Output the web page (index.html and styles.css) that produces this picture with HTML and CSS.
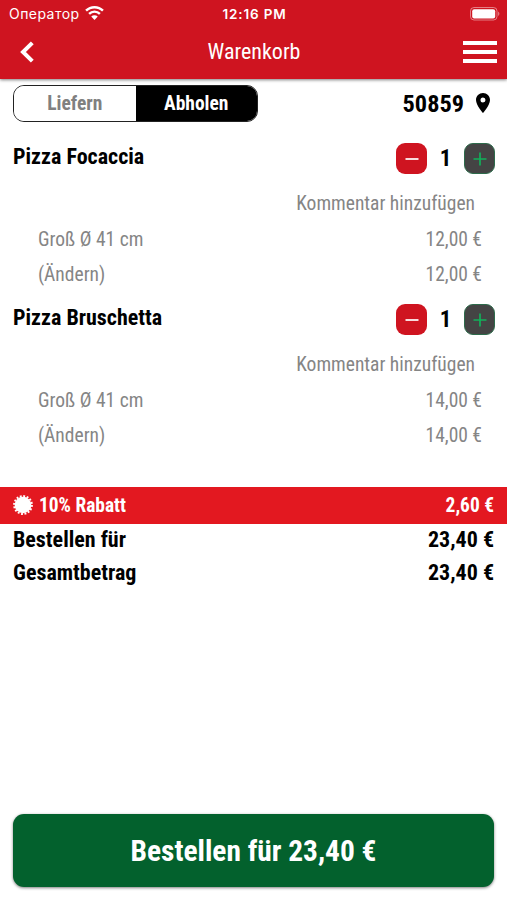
FILE: index.html
```html
<!DOCTYPE html>
<html lang="de">
<head>
    <meta charset="UTF-8">
    <meta name="viewport" content="width=device-width, initial-scale=1.0">
    <title>Warenkorb</title>
    <link rel="stylesheet" href="styles.css">
</head>
<body>
    <header class="header">
        <div class="status-bar">
            <div class="carrier">
                <span>Оператор</span>
                <svg class="wifi" viewBox="0 0 18 14" width="19" height="15">
                    <path d="M1 5.3a11.4 11.4 0 0 1 16 0M3.9 8.3a7.2 7.2 0 0 1 10.2 0" fill="none" stroke="#fff" stroke-width="2.3"/>
                    <path d="M9 14l-3.1-3.2a4.4 4.4 0 0 1 6.2 0z" fill="#fff"/>
                </svg>
            </div>
            <span class="clock">12:16 PM</span>
            <svg class="battery" viewBox="0 0 30 14" width="30" height="14">
                <rect x=".5" y=".5" width="26.5" height="12.5" rx="3.5" fill="none" stroke="#fff" stroke-opacity=".45"/>
                <rect x="2.2" y="2.2" width="23" height="9.2" rx="2" fill="#fff"/>
                <path d="M28.2 4.6v4.4c1.6-.7 1.6-3.7 0-4.4z" fill="#fff" fill-opacity=".5"/>
            </svg>
        </div>
        <nav class="nav-bar">
            <svg class="back" viewBox="0 0 14 22" width="14" height="22">
                <path d="M12.3 1.8L3 11l9.3 9.2" fill="none" stroke="#fff" stroke-width="4"/>
            </svg>
            <h1>Warenkorb</h1>
            <div class="menu">
                <span></span>
                <span></span>
                <span></span>
            </div>
        </nav>
    </header>

    <main class="cart">
        <div class="delivery">
            <div class="switch">
                <button class="option" type="button">Liefern</button>
                <button class="option active" type="button">Abholen</button>
            </div>
            <div class="zip">
                <span>50859</span>
                <svg viewBox="5 2 14 20" width="14" height="20">
                    <path d="M12 2C8.1 2 5 5.1 5 9c0 5.300 7 13 7 13s7-7.700 7-13c0-3.900-3.100-7-7-7zm0 9.500a2.500 2.500 0 1 1 0-5 2.500 2.500 0 0 1 0 5z"/>
                </svg>
            </div>
        </div>

        <section class="item">
            <div class="item-head">
                <h2>Pizza Focaccia</h2>
                <div class="counter">
                    <button class="minus" type="button"><svg viewBox="0 0 14 14" width="14" height="14"><path d="M.5 7h13"/></svg></button>
                    <span>1</span>
                    <button class="plus" type="button"><svg viewBox="0 0 14 14" width="14" height="14"><path d="M.5 7h13M7 .5v13"/></svg></button>
                </div>
            </div>
            <div class="comment">Kommentar hinzufügen</div>
            <div class="line"><span>Groß Ø 41 cm</span><span>12,00 €</span></div>
            <div class="line"><span>(Ändern)</span><span>12,00 €</span></div>
        </section>

        <section class="item">
            <div class="item-head">
                <h2>Pizza Bruschetta</h2>
                <div class="counter">
                    <button class="minus" type="button"><svg viewBox="0 0 14 14" width="14" height="14"><path d="M.5 7h13"/></svg></button>
                    <span>1</span>
                    <button class="plus" type="button"><svg viewBox="0 0 14 14" width="14" height="14"><path d="M.5 7h13M7 .5v13"/></svg></button>
                </div>
            </div>
            <div class="comment">Kommentar hinzufügen</div>
            <div class="line"><span>Groß Ø 41 cm</span><span>14,00 €</span></div>
            <div class="line"><span>(Ändern)</span><span>14,00 €</span></div>
        </section>

        <div class="discount">
            <svg viewBox="-10 -10 20 20" width="20" height="20">
                <circle r="8.300" fill="#fff"/>
                <circle r="8.900" fill="none" stroke="#fff" stroke-width="2" stroke-dasharray="1.900 1.595"/>
            </svg>
            <span>10% Rabatt</span>
            <span class="price">2,60 €</span>
        </div>
        <div class="total"><span>Bestellen für</span><span>23,40 €</span></div>
        <div class="total"><span>Gesamtbetrag</span><span>23,40 €</span></div>
    </main>

    <footer class="footer">
        <button class="order" type="button">Bestellen für 23,40 €</button>
    </footer>
</body>
</html>
```
FILE: styles.css
```css
* {
    box-sizing: border-box;
}

body {
    margin: 0;
    height: 900px;
    display: flex;
    flex-direction: column;
    background-color: #fff;
    color: #000;
    font-family: 'Roboto Condensed', Roboto, sans-serif;
    font-stretch: 75%;
    overflow: hidden;
}

h1,
h2 {
    margin: 0;
}

button {
    font: inherit;
    border: none;
    padding: 0;
}

/* Red top area */
.header {
    height: 79px;
    background-color: #cf1420;
    color: #fff;
    box-shadow: 0 1px 3px rgba(0, 0, 0, 0.5);
}

.status-bar {
    height: 27px;
    padding: 0 7px 0 9px;
    display: grid;
    grid-template-columns: 1fr auto 1fr;
    align-items: center;
    font-family: Inter, sans-serif;
    font-stretch: normal;
    font-size: 14px;
}

.carrier {
    display: flex;
    align-items: center;
    gap: 5px;
    letter-spacing: 0.45px;
}

.wifi {
    margin-bottom: 2px;
}

.clock {
    font-size: 13.5px;
    font-weight: 600;
    letter-spacing: 0.85px;
}

.battery {
    justify-self: end;
}

.nav-bar {
    height: 49px;
    padding: 0 10px 0 20px;
    display: grid;
    grid-template-columns: 1fr auto 1fr;
    align-items: center;
}

.nav-bar h1 {
    margin-right: 9px;
    font-size: 22px;
    font-weight: 400;
}

.menu {
    justify-self: end;
    width: 34px;
    display: grid;
    gap: 5px;
}

.menu span {
    height: 4px;
    background-color: #fff;
}

/* Pickup or delivery */
.delivery {
    height: 50px;
    padding: 6px 17px 0 13px;
    display: flex;
    justify-content: space-between;
    align-items: flex-start;
}

.switch {
    width: 245px;
    height: 37px;
    display: flex;
    border: 1px solid #222;
    border-radius: 11px;
    overflow: hidden;
}

.option {
    flex: 1;
    background-color: #fff;
    color: #808080;
    font-size: 19.5px;
    font-weight: 700;
}

.option.active {
    background-color: #000;
    color: #fff;
}

.zip {
    height: 36px;
    display: flex;
    align-items: center;
    gap: 12px;
    font-size: 24.3px;
    font-weight: 700;
}

/* Cart items */
.item {
    height: 161px;
    padding: 10px 12px 0 13px;
}

.item-head {
    height: 47px;
    display: flex;
    justify-content: space-between;
}

.item-head h2 {
    font-size: 22px;
    line-height: 36px;
}

.counter {
    height: 39px;
    display: flex;
    align-items: center;
    font-size: 23px;
    font-weight: 700;
}

.counter span {
    width: 37px;
    text-align: center;
}

.counter button {
    width: 31px;
    height: 31px;
    border-radius: 9px;
    display: flex;
    align-items: center;
    justify-content: center;
}

.counter path {
    fill: none;
    stroke-width: 1.7;
}

.minus {
    background-color: #cf1420;
    stroke: #fff;
}

.plus {
    background-color: #444;
    border: 1px solid #2d6b4b;
    stroke: #12b05a;
}

.comment,
.line {
    color: #858585;
    font-size: 19.5px;
    line-height: 35.5px;
}

.comment {
    padding-right: 20px;
    text-align: right;
}

.line {
    padding: 0 13px 0 25px;
    display: flex;
    justify-content: space-between;
}

/* Totals */
.discount {
    height: 37px;
    margin-top: 36px;
    padding: 0 13px 1px;
    display: flex;
    align-items: center;
    gap: 6px;
    background-color: #e31820;
    color: #fff;
    font-size: 19.4px;
    font-weight: 700;
}

.discount .price {
    margin-left: auto;
}

.total {
    padding: 0 13px;
    display: flex;
    justify-content: space-between;
    font-size: 22px;
    font-weight: 700;
    line-height: 33px;
}

.discount + .total {
    margin-top: -1px;
}

/* Order button */
.footer {
    margin-top: auto;
    padding: 0 13px 13px;
}

.order {
    width: 100%;
    height: 73px;
    border-radius: 11px;
    background-color: #03612d;
    color: #fff;
    font-size: 29.4px;
    font-weight: 700;
    box-shadow: 0 1px 3px rgba(0, 0, 0, 0.5);
}
```
